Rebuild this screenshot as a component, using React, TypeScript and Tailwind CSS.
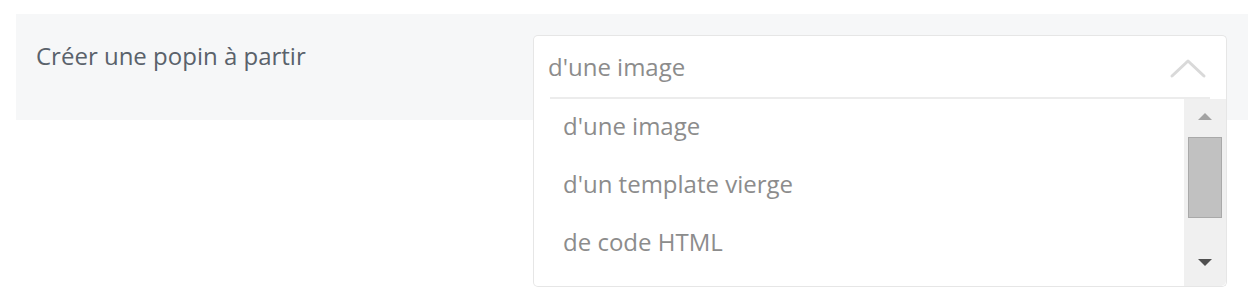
const options = ["d'une image", "d'un template vierge", "de code HTML"];

function Chevron() {
  return (
    <svg width="38" height="22" viewBox="0 0 38 22" fill="none">
      <polyline
        points="3,19 19,4 35,19"
        stroke="#d9d9d9"
        strokeWidth="3"
        strokeLinecap="round"
        strokeLinejoin="round"
      />
    </svg>
  );
}

function Scrollbar() {
  return (
    <div className="flex w-[42px] flex-col items-center rounded-br-[5px] bg-[#f0f0f0]">
      <div className="mt-[14px] h-0 w-0 border-x-[7px] border-b-[7px] border-x-transparent border-b-[#a3a3a3]" />
      <div className="mt-[17px] h-[81px] w-[34px] border border-[#a9a9a9] bg-[#c1c1c1]" />
      <div className="mt-auto mb-[20px] h-0 w-0 border-x-[7px] border-t-[7px] border-x-transparent border-t-[#505050]" />
    </div>
  );
}

export default function App() {
  return (
    <div className="min-h-[298px] bg-white pt-[14px] pl-4 pr-3 font-['Open_Sans',sans-serif]">
      <div className="flex h-[106px] bg-[#f6f7f8]">
        <div className="w-[517px] pl-5 pt-[24px] text-[24px] leading-[36px] text-[#5a626b]">
          Créer une popin à partir
        </div>
        <div className="relative mt-[21px] h-fit w-[694px]">
          <div className="flex h-[64px] items-center justify-between rounded-t-[5px] border-x border-t border-[#e6e6e6] bg-white pl-[14px] pr-[19px] text-[24px] leading-[36px] text-[#8c8c8c]">
            <span className="-mt-[2px]">d'une image</span>
            <Chevron />
          </div>
          <div className="absolute top-full left-0 flex h-[188px] w-full rounded-b-[5px] border-x border-b border-[#e6e6e6] bg-white">
            <div className="absolute -top-[2px] left-[16px] right-[16px] h-[2px] bg-[#ececec]" />
            <ul className="flex-1 pl-[29px] text-[24px] leading-[36px] text-[#8c8c8c]">
              {options.map((option) => (
                <li key={option} className="h-[58px] pt-[9px]">
                  {option}
                </li>
              ))}
            </ul>
            <Scrollbar />
          </div>
        </div>
      </div>
    </div>
  );
}
